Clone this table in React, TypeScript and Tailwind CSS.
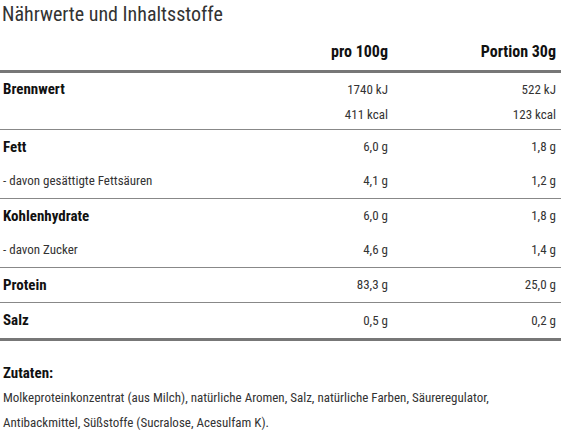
import React from 'react';

type Line = { label: string; bold?: boolean; per100: string; portion: string };

const groups: { lines: Line[] }[] = [
  {
    lines: [
      { label: 'Brennwert', bold: true, per100: '1740 kJ', portion: '522 kJ' },
      { label: '', per100: '411 kcal', portion: '123 kcal' },
    ],
  },
  {
    lines: [
      { label: 'Fett', bold: true, per100: '6,0 g', portion: '1,8 g' },
      { label: '- davon gesättigte Fettsäuren', per100: '4,1 g', portion: '1,2 g' },
    ],
  },
  {
    lines: [
      { label: 'Kohlenhydrate', bold: true, per100: '6,0 g', portion: '1,8 g' },
      { label: '- davon Zucker', per100: '4,6 g', portion: '1,4 g' },
    ],
  },
  { lines: [{ label: 'Protein', bold: true, per100: '83,3 g', portion: '25,0 g' }] },
  { lines: [{ label: 'Salz', bold: true, per100: '0,5 g', portion: '0,2 g' }] },
];

const App: React.FC = () => {
  return (
    <div
      className="w-[561px] h-[433px] overflow-hidden bg-white text-[#333]"
      style={{ fontFamily: '"Roboto Condensed", "DejaVu Sans Condensed", Roboto, sans-serif' }}
    >
      {/* Title */}
      <h2 className="pl-[2px] text-[20px] leading-[28px] font-normal text-[#333]">Nährwerte und Inhaltsstoffe</h2>

      {/* Header */}
      <div className="grid grid-cols-[1fr_140px_168px] pr-[5px] h-[42px] pt-[6px] items-center text-[16px] font-bold text-[#111]">
        <span />
        <span className="text-right">pro 100g</span>
        <span className="text-right">Portion 30g</span>
      </div>

      {/* Table */}
      <div className="border-t-[3px] border-[#777]">
        {groups.map((group, gi) => {
          const isEnergy = gi === 0;
          const isLast = gi === groups.length - 1;
          return (
            <div
              key={gi}
              className={
                isLast
                  ? 'h-[38px] flex flex-col justify-center border-b-[3px] border-[#777]'
                  : isEnergy
                  ? 'pt-[4px] pb-[2px] border-b border-[#888]'
                  : 'border-b border-[#888]'
              }
            >
              {group.lines.map((line, li) => (
                <div
                  key={li}
                  className={`grid grid-cols-[1fr_140px_168px] pr-[5px] items-center ${
                    isEnergy ? 'h-[25px]' : 'h-[34px]'
                  }`}
                >
                  <span
                    className={
                      line.bold
                        ? 'pl-[3px] text-[15px] font-bold text-[#111]'
                        : 'pl-[3px] text-[13px] text-[#333]'
                    }
                  >
                    {line.label}
                  </span>
                  <span className="text-right text-[13px]">{line.per100}</span>
                  <span className="text-right text-[13px]">{line.portion}</span>
                </div>
              ))}
            </div>
          );
        })}
      </div>

      {/* Ingredients */}
      <div className="pl-[3px] pt-[22px]">
        <h3 className="text-[15px] leading-[20px] font-bold text-[#111]">Zutaten:</h3>
        <p className="mt-[2px] text-[13px] leading-[25px] text-[#333]">
          Molkeproteinkonzentrat (aus Milch), natürliche Aromen, Salz, natürliche Farben, Säureregulator,
          <br />
          Antibackmittel, Süßstoffe (Sucralose, Acesulfam K).
        </p>
      </div>
    </div>
  );
};

export default App;
